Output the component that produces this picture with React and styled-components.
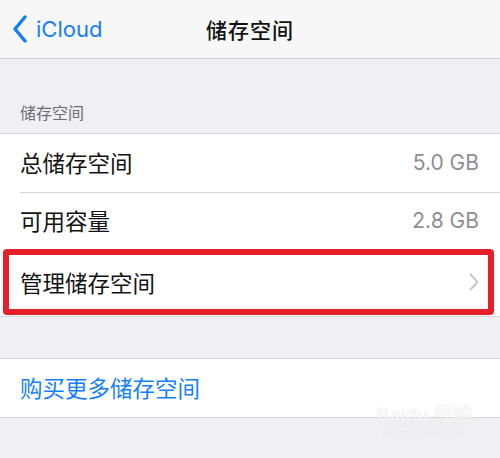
import React from "react";
import styled, { createGlobalStyle } from "styled-components";

const GlobalStyle = createGlobalStyle`
  html, body {
    margin: 0;
    padding: 0;
    background: #efeff4;
  }
  body {
    font-family: "Inter", "Noto Sans CJK SC", sans-serif;
  }
`;

const Screen = styled.div`
  width: 500px;
  height: 458px;
  overflow: hidden;
  background: #efeff4;
  position: relative;
`;

const NavBar = styled.div`
  height: 58px;
  background: #f7f7f8;
  border-bottom: 1px solid #cfcfd3;
  display: grid;
  grid-template-columns: 1fr auto 1fr;
  align-items: center;
`;

const BackButton = styled.div`
  display: flex;
  align-items: center;
  gap: 8px;
  padding-left: 12px;
  color: #157efb;
  font-size: 22px;
`;

const Title = styled.div`
  font-size: 21px;
  font-weight: 500;
  color: #111;
  letter-spacing: 1px;
`;

const SectionHeader = styled.div`
  height: 74px;
  box-sizing: border-box;
  display: flex;
  align-items: flex-end;
  padding: 0 20px 9px;
  font-size: 16px;
  color: #6d6d72;
`;

const Group = styled.div`
  background: #fff;
  border-top: 1px solid #d8d8dc;
  border-bottom: 1px solid #d8d8dc;
  margin-top: ${(p) => p.$top || 0}px;
`;

const Row = styled.div`
  position: relative;
  height: ${(p) => p.$height}px;
  display: flex;
  align-items: center;
  justify-content: space-between;
  padding: 0 21px 2px 20px;
  box-sizing: border-box;
  font-size: 22.5px;
  color: ${(p) => (p.$link ? "#157efb" : "#111")};

  & + &::before {
    content: "";
    position: absolute;
    top: 0;
    left: 20px;
    right: 0;
    border-top: 1px solid #d8d8dc;
  }
`;

const Value = styled.span`
  color: #8e8e93;
  font-size: 21px;
`;

const Highlight = styled.div`
  position: absolute;
  left: 3px;
  right: 6px;
  top: -1px;
  bottom: 1px;
  border: 6px solid #e61f2b;
  border-radius: 4px;
  pointer-events: none;
`;

const Watermark = styled.div`
  position: absolute;
  right: 28px;
  bottom: 20px;
  text-align: center;
  color: rgba(255, 255, 255, 0.75);
  text-shadow: 0 0 1px rgba(0, 0, 0, 0.12);
  font-family: "Liberation Sans", "Noto Sans CJK SC", sans-serif;
  line-height: 1;
`;

const WatermarkMain = styled.div`
  font-size: 19px;
  font-weight: bold;
`;

const WatermarkSub = styled.div`
  font-size: 10px;
  margin-top: 4px;
`;

const BackChevron = () => (
  <svg width="16" height="28" viewBox="0 0 16 28">
    <path d="M13 2 L3 14 L13 26" fill="none" stroke="#157efb" strokeWidth="3.4" strokeLinecap="round" strokeLinejoin="round" />
  </svg>
);

const Disclosure = () => (
  <svg width="10" height="18" viewBox="0 0 10 18">
    <path d="M1.5 1.5 L8.5 9 L1.5 16.5" fill="none" stroke="#c7c7cc" strokeWidth="2" strokeLinecap="round" strokeLinejoin="round" />
  </svg>
);

export default function App() {
  return (
    <>
      <GlobalStyle />
      <Screen>
        <NavBar>
          <BackButton>
            <BackChevron />
            iCloud
          </BackButton>
          <Title>储存空间</Title>
          <div />
        </NavBar>
        <SectionHeader>储存空间</SectionHeader>
        <Group>
          <Row $height={58}>
            总储存空间
            <Value>5.0 GB</Value>
          </Row>
          <Row $height={58}>
            可用容量
            <Value>2.8 GB</Value>
          </Row>
          <Row $height={66}>
            管理储存空间
            <Disclosure />
            <Highlight />
          </Row>
        </Group>
        <Group $top={41}>
          <Row $height={58} $link>
            购买更多储存空间
          </Row>
        </Group>
        <Watermark>
          <WatermarkMain>Baidu 经验</WatermarkMain>
          <WatermarkSub>jingyan.baidu.com</WatermarkSub>
        </Watermark>
      </Screen>
    </>
  );
}
